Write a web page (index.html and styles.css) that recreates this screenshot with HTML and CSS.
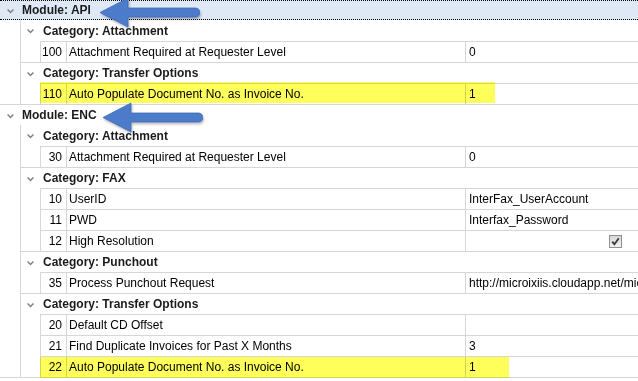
FILE: index.html
```html
<!DOCTYPE html>
<html lang="en">

<head>
    <meta charset="UTF-8">
    <title>Module Settings</title>
    <link rel="stylesheet" href="styles.css">
</head>

<body>
    <div class="tree">
        <!-- Module: API -->
        <div class="module">
            <div class="module-head focused"><svg class="chev" viewBox="0 0 7 5"><path d="M0.6 0.6 L3.5 3.6 L6.4 0.6" /></svg>Module: API</div>
            <svg class="arrow" viewBox="0 0 100 31"><path d="M0 15.5 L28 1 L28 11 L95.5 11 A4.5 4.5 0 0 1 95.5 20 L28 20 L28 30 Z" /></svg>
            <div class="module-body">
                <div class="category">
                    <div class="cat-head"><svg class="chev" viewBox="0 0 7 5"><path d="M0.6 0.6 L3.5 3.6 L6.4 0.6" /></svg>Category: Attachment</div>
                    <div class="cat-body">
                        <div class="row"><div class="num">100</div><div class="name">Attachment Required at Requester Level</div><div class="value">0</div></div>
                    </div>
                </div>
                <div class="category">
                    <div class="cat-head"><svg class="chev" viewBox="0 0 7 5"><path d="M0.6 0.6 L3.5 3.6 L6.4 0.6" /></svg>Category: Transfer Options</div>
                    <div class="cat-body">
                        <div class="row"><span class="marker marker-top"></span><div class="num">110</div><div class="name">Auto Populate Document No. as Invoice No.</div><div class="value">1</div></div>
                    </div>
                </div>
            </div>
        </div>

        <!-- Module: ENC -->
        <div class="module">
            <div class="module-head"><svg class="chev" viewBox="0 0 7 5"><path d="M0.6 0.6 L3.5 3.6 L6.4 0.6" /></svg>Module: ENC</div>
            <svg class="arrow arrow-enc" viewBox="0 0 100 31"><path d="M0 15.5 L28 1 L28 11 L95.5 11 A4.5 4.5 0 0 1 95.5 20 L28 20 L28 30 Z" /></svg>
            <div class="module-body">
                <div class="category">
                    <div class="cat-head"><svg class="chev" viewBox="0 0 7 5"><path d="M0.6 0.6 L3.5 3.6 L6.4 0.6" /></svg>Category: Attachment</div>
                    <div class="cat-body">
                        <div class="row"><div class="num">30</div><div class="name">Attachment Required at Requester Level</div><div class="value">0</div></div>
                    </div>
                </div>
                <div class="category">
                    <div class="cat-head"><svg class="chev" viewBox="0 0 7 5"><path d="M0.6 0.6 L3.5 3.6 L6.4 0.6" /></svg>Category: FAX</div>
                    <div class="cat-body">
                        <div class="row"><div class="num">10</div><div class="name">UserID</div><div class="value">InterFax_UserAccount</div></div>
                        <div class="row"><div class="num">11</div><div class="name">PWD</div><div class="value">Interfax_Password</div></div>
                        <div class="row"><div class="num">12</div><div class="name">High Resolution</div><div class="value check-cell"><span class="checkbox"><svg viewBox="0 0 11 11"><path d="M2.2 5.6 L4.4 8.2 L8.8 2.2" /></svg></span></div></div>
                    </div>
                </div>
                <div class="category">
                    <div class="cat-head"><svg class="chev" viewBox="0 0 7 5"><path d="M0.6 0.6 L3.5 3.6 L6.4 0.6" /></svg>Category: Punchout</div>
                    <div class="cat-body">
                        <div class="row"><div class="num">35</div><div class="name">Process Punchout Request</div><div class="value">http://microixiis.cloudapp.net/microix</div></div>
                    </div>
                </div>
                <div class="category">
                    <div class="cat-head"><svg class="chev" viewBox="0 0 7 5"><path d="M0.6 0.6 L3.5 3.6 L6.4 0.6" /></svg>Category: Transfer Options</div>
                    <div class="cat-body">
                        <div class="row"><div class="num">20</div><div class="name">Default CD Offset</div><div class="value"></div></div>
                        <div class="row"><div class="num">21</div><div class="name">Find Duplicate Invoices for Past X Months</div><div class="value">3</div></div>
                        <div class="row"><span class="marker marker-bottom"></span><div class="num">22</div><div class="name">Auto Populate Document No. as Invoice No.</div><div class="value">1</div></div>
                    </div>
                </div>
            </div>
        </div>
    </div>
</body>

</html>
```

FILE: styles.css
```css
html,
body {
    margin: 0;
    overflow: hidden;
    background: white;
}

body {
    font-family: 'Liberation Sans', Arial, sans-serif;
    font-size: 12px;
    color: #000;
}

.tree {
    position: relative;
    width: 764px;
    border-bottom: 1px solid #d6d6d6;
}

/* module level */
.module {
    position: relative;
}

.module + .module {
    border-top: 1px solid #d6d6d6;
}

.module-head {
    display: flex;
    align-items: center;
    height: 20px;
    padding-left: 7px;
    font-weight: bold;
    color: #1b1b1b;
}

.module-head.focused {
    box-sizing: border-box;
    background: #dfe8f5;
    border-top: 1px dotted #000;
    border-bottom: 1px dotted #000;
}

.module-body {
    margin-left: 20px;
    border-left: 1px solid #d6d6d6;
}

.chev {
    width: 7px;
    height: 5px;
    margin-top: 2px;
    margin-right: 8px;
    flex-shrink: 0;
}

.chev path {
    fill: none;
    stroke: #7c7c7c;
    stroke-width: 1.4;
}

/* category level */
.category + .category {
    border-top: 1px solid #d6d6d6;
}

.category + .category .cat-head {
    height: 20px;
}

.cat-head {
    display: flex;
    align-items: center;
    height: 21px;
    padding-left: 6px;
    font-weight: bold;
    color: #1b1b1b;
}

.cat-head .chev {
    margin-right: 9px;
}

.cat-body {
    margin-left: 19px;
    border-left: 1px solid #d6d6d6;
}

/* setting rows */
.row {
    position: relative;
    display: flex;
    height: 21px;
    box-sizing: border-box;
    border-top: 1px solid #d6d6d6;
    line-height: 20px;
}

.num {
    width: 25px;
    padding-right: 4px;
    box-sizing: border-box;
    text-align: right;
    border-right: 1px solid #d6d6d6;
    flex-shrink: 0;
    width: 26px;
}

.name {
    width: 399px;
    box-sizing: border-box;
    padding-left: 2px;
    border-right: 1px solid #d6d6d6;
    flex-shrink: 0;
    white-space: nowrap;
}

.value {
    flex: 1;
    padding-left: 3px;
    white-space: nowrap;
}

.check-cell {
    display: flex;
    align-items: center;
    justify-content: center;
    padding-left: 0;
}

.checkbox {
    width: 11px;
    height: 11px;
    border: 1px solid #8f8f8f;
    background: linear-gradient(#d8d8d8, #f2f2f2);
    margin-top: 1px;
}

.checkbox svg {
    display: block;
    width: 11px;
    height: 11px;
}

.checkbox path {
    fill: none;
    stroke: #3a3a3a;
    stroke-width: 1.8;
}

/* annotations */
.marker {
    position: absolute;
    left: -1px;
    background: #ffff5c;
    mix-blend-mode: multiply;
    pointer-events: none;
}

.marker-top {
    top: -2px;
    width: 455px;
    height: 21px;
}

.marker-bottom {
    top: 0;
    width: 469px;
    height: 23px;
}

.arrow {
    position: absolute;
    left: 100px;
    top: -3px;
    width: 100px;
    height: 31px;
    filter: drop-shadow(1px 2px 1px rgba(0, 0, 0, 0.25));
}

.arrow-enc {
    left: 103px;
}

.arrow path {
    fill: #4b7bc9;
    stroke: #3e6db8;
    stroke-width: 0.8;
}
```
